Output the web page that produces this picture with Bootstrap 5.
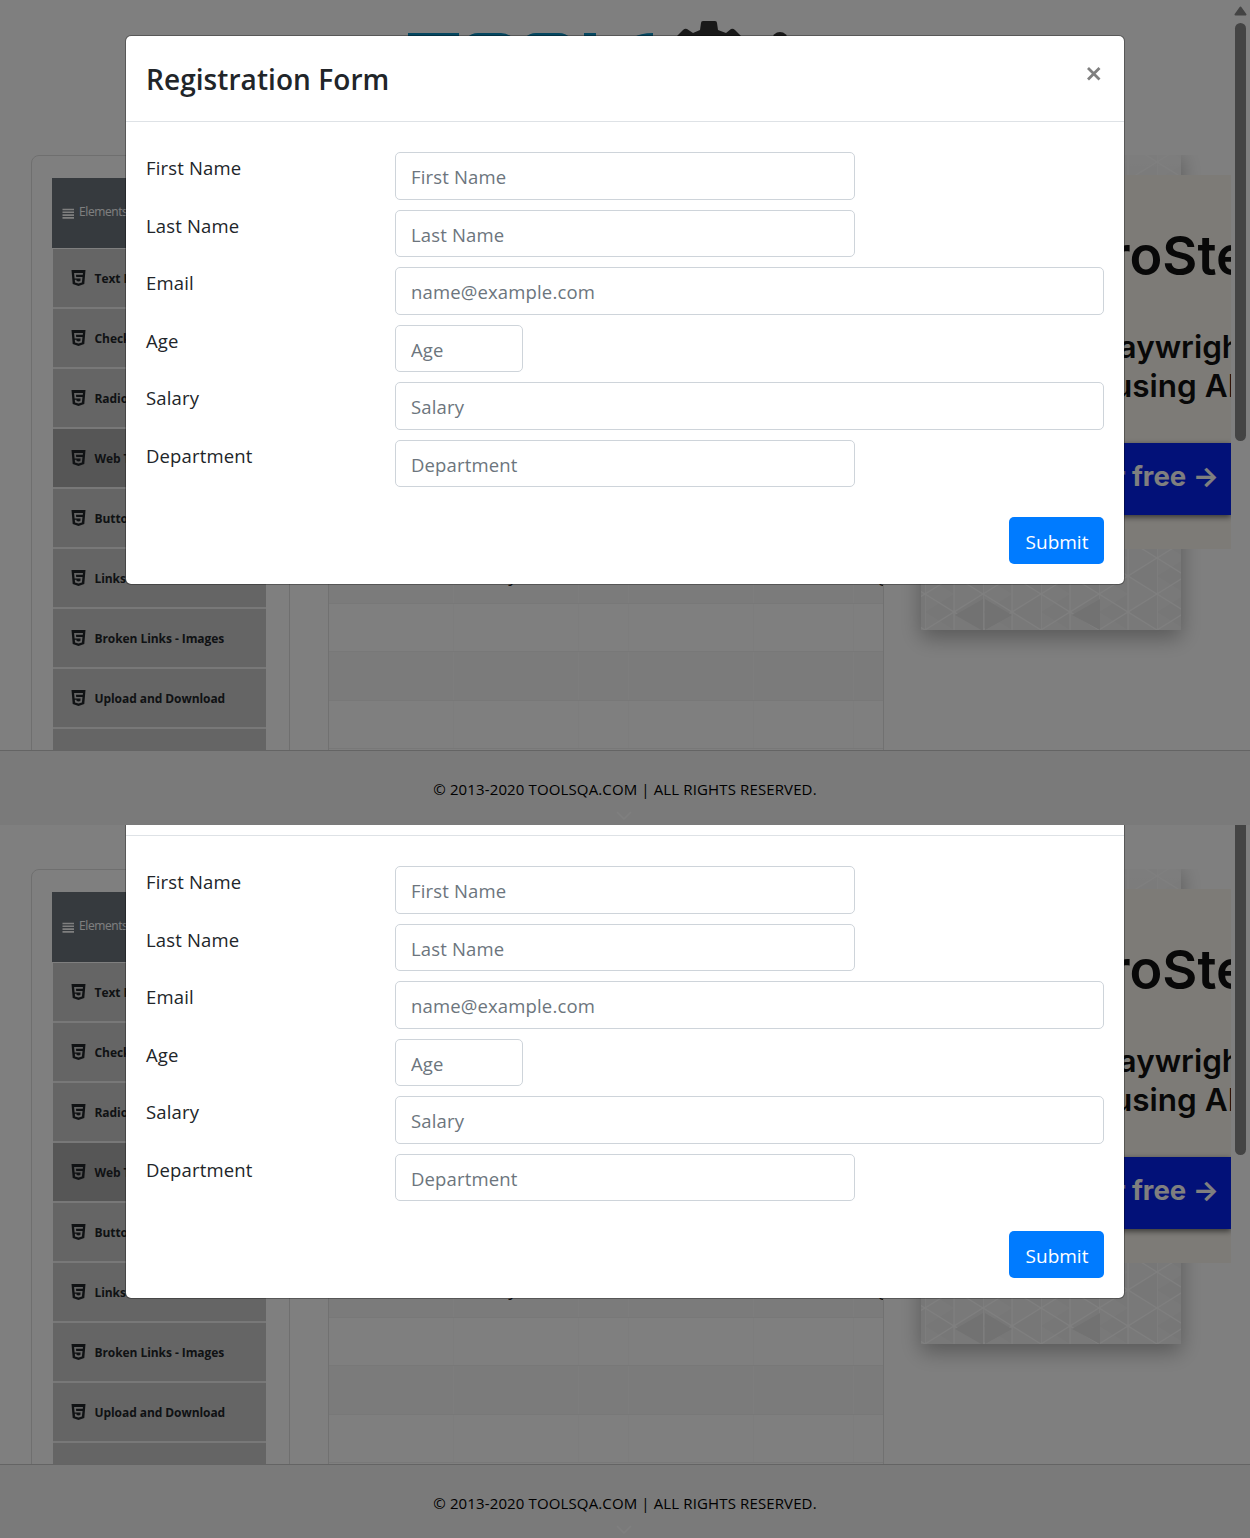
<!DOCTYPE html>
<html lang="en">
<head>
<meta charset="utf-8">
<title>Registration Form</title>
<link href="https://cdn.jsdelivr.net/npm/bootstrap@5.3.0/dist/css/bootstrap.min.css" rel="stylesheet">
<style>
body{font-family:"Open Sans","Noto Sans",sans-serif;width:1250px;height:1538px;overflow:hidden;color:#212529}
.screen{position:relative;width:1250px;height:825px;overflow:hidden;background:#fff}
.second{margin-top:-111px}
.clipper{height:713px;overflow:hidden}
.site-head{height:155px;padding:20px 0 0 407px}
.site-body{height:595px;padding-left:31px;overflow:hidden}
.side{width:259px;height:640px;border:1px solid #dedede;border-radius:8px;padding:22px 23px 0 20px;margin-right:38px}
.side-head{height:70px;background:#6c757d;color:#fff;font-size:12px;letter-spacing:-.4px;padding:0 10px;margin-bottom:1px}
.side-head span{margin-top:-3px}
.side-item{height:60px;border-bottom:2px solid #f0f0f0;background:#cbcbcb;margin-left:1px;padding-left:17.5px;font-size:12px;font-weight:700;letter-spacing:-.07px}
.side-item span{margin-top:1px;white-space:nowrap}
.side-item svg{margin-right:9px}
.side-item.on{background:#adadad}
.grid-box{width:556px;height:640px;border:1px solid #e2e2e2;border-width:0 1px;padding-top:400.4px;margin-right:37px}
.grid-row{height:48.4px;border-bottom:1px solid #f0f0f0;overflow:hidden}
.grid-row:nth-child(odd){background:#f6f6f6}
.grid-row>div{flex:none;border-right:1px solid #fafafa;padding:6px 5px;font-size:18.5px;white-space:nowrap;overflow:hidden;text-overflow:ellipsis}
.grid-row>.w-rest{width:29px;text-overflow:clip;border:0;padding-right:0}
.w125{width:125px}.w50{width:50px}.w100{width:100px}
.ads{width:310px;position:relative}
.poster{width:260px;height:480px;margin-top:-5px;box-shadow:0 8px 20px rgba(0,0,0,.3)}
.promo{position:absolute;left:9px;top:20px;width:301px;height:374px;background:#fbf7ef;overflow:hidden;font-family:Inter,sans-serif;color:#111;white-space:nowrap}
.promo-name{font-size:54px;font-weight:600;line-height:60px;margin:51px 0 0 112px}
.promo-sub{font-size:31.5px;font-weight:600;line-height:39px;margin:41px 0 0 160px}
.promo-sub div+div{padding-left:23px}
.promo-cta{height:72px;margin-top:38px;background:#0422f0;color:#fff;font-size:27.5px;font-weight:700;line-height:67px;padding-left:105.500px;box-shadow:0 2px 6px rgba(0,0,0,.6)}
.site-foot{height:75px;border-top:1px solid #c8c8c8;background:#f4f4f4;font-size:15px;color:#000;padding-top:27px;position:relative}
.foot-text{line-height:22px;letter-spacing:.13px}
.chev{position:absolute;left:616px;top:60px}
.shade{position:absolute;inset:0;background:rgba(0,0,0,.5)}
.bar-up{position:absolute;left:1233px;top:5px}
.bar-thumb{position:absolute;left:1235px;top:23px;width:11px;height:418px;border-radius:6px;background:#444}
.dialog-box{position:absolute;left:125px;top:35px;width:1000px;height:550px;background:#fff;background-clip:padding-box;border:1px solid rgba(0,0,0,.3);border-radius:6px}
.dlg-head{height:86px;border-bottom:1px solid #dee2e6;padding:20px}
.dlg-title{font-size:28px;font-weight:600;line-height:46px;white-space:nowrap;margin:0;letter-spacing:.07px}
.dlg-form{padding:30px 20px 0}
.f-row{height:47.5px;margin-bottom:10px}
.f-label{width:249px;font-size:18.5px;line-height:32px;white-space:nowrap;letter-spacing:.15px}
.f-in{height:47.5px;border-color:#ced4da;border-radius:5px;padding:2px 15px 0;font-size:18.5px;letter-spacing:.15px}
.f-in::placeholder{color:#6c757d}
.w-mid{width:460px}.w-full{width:709px}.w-sm{width:128px}
.btn-send{width:95px;height:47px;background:#007bff;color:#fff;border-radius:5px;font-size:19px;padding:3px 0 0 1px;margin-top:20px}
</style>
</head>
<body>
<svg width="0" height="0" class="position-absolute">
 <symbol id="h5" viewBox="0 0 14 16"><path fill="#212529" fill-rule="evenodd" d="M0 0h14l-1.2 14L7 16 1.2 14zM2.6 3l.5 5.5h6l-.25 2.6L7 11.6l-1.9-.5-.1-1.3H3.3l.25 2.7L7 13.4l3.4-.9L11 7H4.7l-.2-2.3h6.8l.15-1.7z"/></symbol>
</svg>
<div class="screen" id="page">
 <div class="site-head">
  <svg width="400" height="90" viewBox="0 0 400 90">
   <g fill="#0a8fc0"><path d="M1 13h51v10H34v50H20V23H1z"/><rect x="55" y="13" width="55" height="60" rx="16"/><rect x="113" y="13" width="55" height="60" rx="16"/><path d="M177 13h12v48h28v12h-40zM246 13q-26 0-26 18t22 18l-18 24h22V13z"/></g>
   <path fill="#333" d="M296 1h12q2 0 2 2l1 7 8 3 5-4q2-1 4 1l8 8v40h-68V18l8-8q2-2 4-1l6 4 7-3 1-7q0-2 2-2z"/><circle cx="373" cy="20" r="8" fill="#333"/>
  </svg>
 </div>
 <div class="site-body d-flex align-items-start">
  <div class="side flex-shrink-0">
   <div class="side-head d-flex align-items-center"><svg class="me-1" width="13" height="12" viewBox="0 0 13 12"><path stroke="#fff" stroke-width="1.6" d="M.5 2.5h11.5M.5 5.3h11.5M.5 8.1h11.5M.5 10.9h11.5"/></svg><span>Elements</span></div>
   <div class="side-item d-flex align-items-center"><svg width="15" height="16"><use href="#h5"/></svg><span>Text Box</span></div>
   <div class="side-item d-flex align-items-center"><svg width="15" height="16"><use href="#h5"/></svg><span>Check Box</span></div>
   <div class="side-item d-flex align-items-center"><svg width="15" height="16"><use href="#h5"/></svg><span>Radio</span></div>
   <div class="side-item on d-flex align-items-center"><svg width="15" height="16"><use href="#h5"/></svg><span>Web Tables</span></div>
   <div class="side-item d-flex align-items-center"><svg width="15" height="16"><use href="#h5"/></svg><span>Buttons</span></div>
   <div class="side-item d-flex align-items-center"><svg width="15" height="16"><use href="#h5"/></svg><span>Links</span></div>
   <div class="side-item d-flex align-items-center"><svg width="15" height="16"><use href="#h5"/></svg><span>Broken Links - Images</span></div>
   <div class="side-item d-flex align-items-center"><svg width="15" height="16"><use href="#h5"/></svg><span>Upload and Download</span></div>
   <div class="side-item"></div>
  </div>
  <div class="grid-box flex-shrink-0">
   <div class="grid-row d-flex"><div class="w125">Kierra</div><div class="w125">Gentry</div><div class="w50">29</div><div class="w125">kierra@example.com</div><div class="w100">2000</div><div class="w-rest">Legal</div></div>
   <div class="grid-row d-flex"><div class="w125"></div><div class="w125"></div><div class="w50"></div><div class="w125"></div><div class="w100"></div></div>
   <div class="grid-row d-flex"><div class="w125"></div><div class="w125"></div><div class="w50"></div><div class="w125"></div><div class="w100"></div></div>
   <div class="grid-row d-flex"><div class="w125"></div><div class="w125"></div><div class="w50"></div><div class="w125"></div><div class="w100"></div></div>
  </div>
  <div class="ads flex-shrink-0">
   <div class="poster"><svg width="260" height="480"><defs><linearGradient id="fade" x2="0" y2="1"><stop offset="0" stop-color="#fff" stop-opacity=".7"/><stop offset=".15" stop-color="#fff" stop-opacity="0"/></linearGradient><pattern id="tri" width="58" height="36" patternUnits="userSpaceOnUse" patternTransform="translate(4 12)"><rect width="58" height="36" fill="#f3f3f3"/><path fill="#efefef" d="M29 0L0 18l29 18zM58 0v36L29 18z"/><path stroke="#fff" stroke-width="1.3" fill="none" d="M0 0v36M29 0v36M0 0l58 36M58 0L0 36"/></pattern></defs><rect width="260" height="480" fill="url(#tri)"/><path fill="#e4e4e4" d="M34 465l28-16v32zM64 449l27 16-27 15zM151 465l28-16v31z"/><rect width="260" height="480" fill="url(#fade)"/></svg></div>
   <div class="promo">
    <div class="promo-name">ZeroStep</div>
    <div class="promo-sub"><div>Playwright</div><div>using AI</div></div>
    <div class="promo-cta">Try for free →</div>
   </div>
  </div>
 </div>
 <footer class="site-foot text-center"><div class="foot-text">© 2013-2020 TOOLSQA.COM | ALL RIGHTS RESERVED.</div>
  <svg class="chev" width="16" height="10"><path d="M1 1l7 7 7-7" fill="none" stroke="#fff" stroke-width="1.5"/></svg></footer>
 <div class="shade"></div>
 <svg class="bar-up" width="14" height="12"><path fill="#444" stroke="#444" stroke-width="2" stroke-linejoin="round" d="M7.5 2.5l5 7h-10z"/></svg>
 <div class="bar-thumb"></div>
 <div class="dialog-box">
  <div class="dlg-head d-flex justify-content-between"><h4 class="dlg-title">Registration Form</h4>
   <svg class="mt-2" width="18" height="20" viewBox="0 0 18 20"><path d="M2 4l11.500 11.500M13.500 4l-11.500 11.500" stroke="#7f7f7f" stroke-width="2.800"/></svg></div>
  <div class="dlg-form">
   <div class="f-row d-flex"><label class="f-label">First Name</label><input class="form-control f-in w-mid" placeholder="First Name"></div>
   <div class="f-row d-flex"><label class="f-label">Last Name</label><input class="form-control f-in w-mid" placeholder="Last Name"></div>
   <div class="f-row d-flex"><label class="f-label">Email</label><input class="form-control f-in w-full" placeholder="name@example.com"></div>
   <div class="f-row d-flex"><label class="f-label">Age</label><input class="form-control f-in w-sm" placeholder="Age"></div>
   <div class="f-row d-flex"><label class="f-label">Salary</label><input class="form-control f-in w-full" placeholder="Salary"></div>
   <div class="f-row d-flex"><label class="f-label">Department</label><input class="form-control f-in w-mid" placeholder="Department"></div>
   <div class="d-flex justify-content-end"><button class="btn btn-send border-0">Submit</button></div>
  </div>
 </div>
</div>
<div class="clipper"><div id="lower"></div></div>
<script src="https://cdn.jsdelivr.net/npm/bootstrap@5.3.0/dist/js/bootstrap.bundle.min.js"></script>
<script>
const copy=document.getElementById('page').cloneNode(true);
copy.removeAttribute('id');
copy.classList.add('second');
copy.querySelector('.dlg-title').textContent='';
document.getElementById('lower').append(copy);
</script>
</body>
</html>
